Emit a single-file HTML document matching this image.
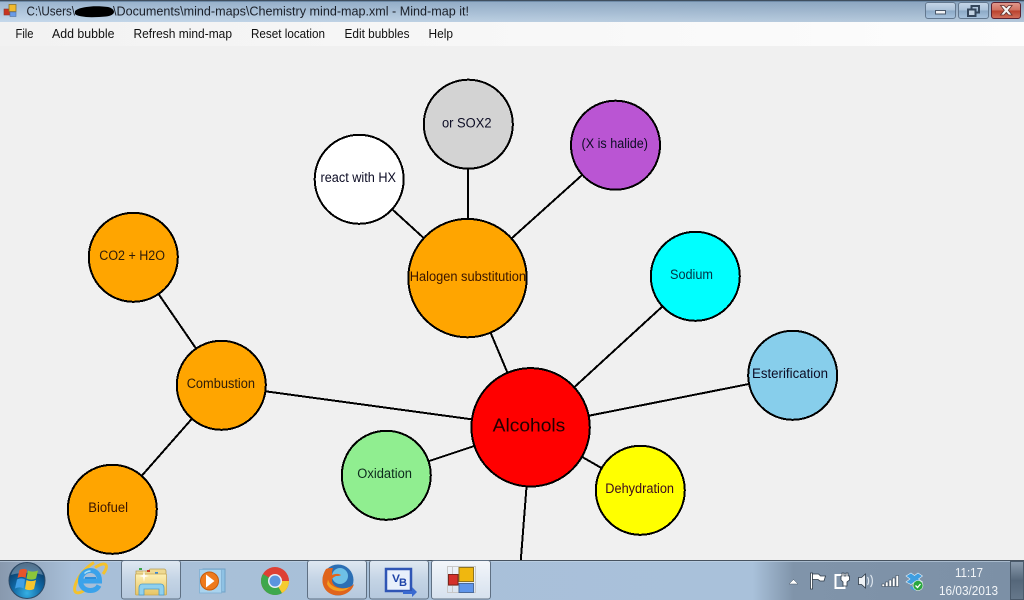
<!DOCTYPE html>
<html><head><meta charset="utf-8"><style>
html,body{margin:0;padding:0;background:#f0f0f0;overflow:hidden}
svg{display:block;font-family:"Liberation Sans",sans-serif}
</style></head><body>
<svg width="1024" height="600" viewBox="0 0 1024 600" xmlns="http://www.w3.org/2000/svg">
<defs>
<linearGradient id="tb" x1="0" y1="0" x2="0" y2="1"><stop offset="0" stop-color="#8fabc8"/><stop offset="1" stop-color="#c0d5e9"/></linearGradient>
<linearGradient id="tbh" x1="0" y1="0" x2="1" y2="0"><stop offset="0" stop-color="#fff" stop-opacity=".08"/><stop offset="1" stop-color="#000" stop-opacity=".06"/></linearGradient>
<linearGradient id="menu" x1="0" y1="0" x2="1" y2="0"><stop offset="0" stop-color="#f2f2f2"/><stop offset="1" stop-color="#fdfdfd"/></linearGradient>
<linearGradient id="task" x1="0" y1="0" x2="1" y2="0"><stop offset="0" stop-color="#8899ae"/><stop offset=".07" stop-color="#a8bfd8"/><stop offset=".735" stop-color="#a9c1da"/><stop offset=".775" stop-color="#8094aa"/><stop offset="1" stop-color="#7c90a6"/></linearGradient>
<linearGradient id="btn" x1="0" y1="0" x2="0" y2="1"><stop offset="0" stop-color="#dfe8f2"/><stop offset=".5" stop-color="#c4d4e5"/><stop offset="1" stop-color="#b5c8dd"/></linearGradient>
<linearGradient id="btna" x1="0" y1="0" x2="0" y2="1"><stop offset="0" stop-color="#f3f6fa"/><stop offset="1" stop-color="#d6e1ee"/></linearGradient>
<linearGradient id="cb" x1="0" y1="0" x2="0" y2="1"><stop offset="0" stop-color="#c5d6e8"/><stop offset=".5" stop-color="#a9c0d8"/><stop offset=".51" stop-color="#8ca9c6"/><stop offset="1" stop-color="#a9c4de"/></linearGradient>
<linearGradient id="close" x1="0" y1="0" x2="0" y2="1"><stop offset="0" stop-color="#e19a8e"/><stop offset=".5" stop-color="#cf6f5e"/><stop offset=".51" stop-color="#b9402c"/><stop offset="1" stop-color="#d2705c"/></linearGradient>
<radialGradient id="orb" cx=".5" cy=".85" r=".85"><stop offset="0" stop-color="#35b0e4"/><stop offset=".5" stop-color="#0e639f"/><stop offset="1" stop-color="#0a2f52"/></radialGradient>
<linearGradient id="fold" x1="0" y1="0" x2="0" y2="1"><stop offset="0" stop-color="#fdf0b4"/><stop offset="1" stop-color="#e6c464"/></linearGradient>
<linearGradient id="sd" x1="0" y1="0" x2="0" y2="1"><stop offset="0" stop-color="#8b9cae"/><stop offset=".5" stop-color="#55677a"/><stop offset="1" stop-color="#66788b"/></linearGradient>
</defs>

<!-- canvas -->
<rect width="1024" height="600" fill="#f0f0f0"/>

<!-- title bar -->
<rect x="0" y="0" width="1024" height="22" fill="url(#tb)"/>
<rect x="0" y="0" width="1024" height="22" fill="url(#tbh)"/>
<rect x="0" y="0" width="1024" height="1" fill="#3f4e5e"/>
<rect x="0" y="1" width="1024" height="1" fill="#6f8ba8"/>
<!-- app icon small -->
<rect x="4" y="9" width="6" height="6" fill="#c8331f" stroke="#8a3a2c" stroke-width=".6"/>
<rect x="9" y="4.500" width="7" height="7" fill="#f0b92c" stroke="#8e7428" stroke-width=".8"/>
<rect x="10" y="12" width="6" height="4.500" fill="#6a9be8" stroke="#53709c" stroke-width=".6"/>
<g font-size="13" fill="#1a1f28">
<text x="26.500" y="15.500" textLength="48.500" lengthAdjust="spacingAndGlyphs">C:\Users\</text>
<text x="113" y="15.500" textLength="356" lengthAdjust="spacingAndGlyphs">\Documents\mind-maps\Chemistry mind-map.xml - Mind-map it!</text>
</g>
<path d="M75 11c3-3 10-4 16-4.500 5-.5 13 0 17 .5 4 1 6 3 6 5 0 2-3 4-8 4.500-6 .5-14 1-20 .5-4-.5-11-1.500-11-3.500 0-1 0-2 0-2.500z" fill="#000"/>
<!-- window buttons -->
<rect x="925.500" y="2.500" width="30" height="16" rx="2.500" fill="url(#cb)" stroke="#63788f"/>
<rect x="958.500" y="2.500" width="30" height="16" rx="2.500" fill="url(#cb)" stroke="#63788f"/>
<rect x="991.500" y="2.500" width="29" height="16" rx="2.500" fill="url(#close)" stroke="#5d2130"/>
<rect x="935.500" y="10.500" width="10" height="3.500" fill="#f0f2f5" stroke="#4a586a"/>
<rect x="971.500" y="6" width="7.500" height="6.500" fill="none" stroke="#34465b" stroke-width="2"/>
<rect x="968" y="9.500" width="7.500" height="6.500" fill="#c2d2e2" stroke="#34465b" stroke-width="2"/>
<path d="M1000.500 5.500h3.500l2.300 2.300 2.300-2.300h3.500l-3.800 4.700 3.800 4.800h-3.500l-2.300-2.500-2.300 2.500h-3.500l3.800-4.800z" fill="#f4f4f4" stroke="#63302c" stroke-width=".8"/>

<!-- menu -->
<rect x="0" y="22" width="1024" height="24" fill="url(#menu)"/>
<g font-size="12.500" fill="#101010">
<text x="15.500" y="38" textLength="18" lengthAdjust="spacingAndGlyphs">File</text>
<text x="52" y="38" textLength="62.500" lengthAdjust="spacingAndGlyphs">Add bubble</text>
<text x="133.500" y="38" textLength="98.500" lengthAdjust="spacingAndGlyphs">Refresh mind-map</text>
<text x="251" y="38" textLength="74" lengthAdjust="spacingAndGlyphs">Reset location</text>
<text x="344.500" y="38" textLength="65" lengthAdjust="spacingAndGlyphs">Edit bubbles</text>
<text x="428.500" y="38" textLength="24.500" lengthAdjust="spacingAndGlyphs">Help</text>
</g>

<!-- links -->
<g stroke="#000" stroke-width="2" fill="none" shape-rendering="crispEdges">
<path d="M530.500 427.300L467.500 278"/>
<path d="M530.500 427.300L695.300 276.300"/>
<path d="M530.500 427.300L792.700 375.300"/>
<path d="M530.500 427.300L640.300 490.300"/>
<path d="M530.500 427.300L386.300 475.300"/>
<path d="M530.500 427.300L221.300 385.300"/>
<path d="M526.500 487L520.800 560"/>
<path d="M467.500 278L359 179"/>
<path d="M468 278V124"/>
<path d="M467.500 278L615.500 145"/>
<path d="M221.300 385.300L133.300 257.300"/>
<path d="M221.300 385.300L112.300 509.300"/>
</g>

<!-- bubbles -->
<g stroke="#000" stroke-width="2" shape-rendering="crispEdges">
<circle cx="530.600" cy="427.300" r="59.200" fill="#ff0000"/>
<circle cx="467.500" cy="278.100" r="59.200" fill="#ffa500"/>
<circle cx="468.300" cy="124.200" r="44.500" fill="#d3d3d3"/>
<circle cx="615.500" cy="145.200" r="44.500" fill="#ba55d3"/>
<circle cx="359.200" cy="179.300" r="44.500" fill="#ffffff"/>
<circle cx="695.300" cy="276.300" r="44.500" fill="#00ffff"/>
<circle cx="792.700" cy="375.300" r="44.500" fill="#87ceeb"/>
<circle cx="640.300" cy="490.300" r="44.500" fill="#ffff00"/>
<circle cx="386.300" cy="475.300" r="44.500" fill="#90ee90"/>
<circle cx="221.300" cy="385.300" r="44.500" fill="#ffa500"/>
<circle cx="133.300" cy="257.300" r="44.500" fill="#ffa500"/>
<circle cx="112.300" cy="509.300" r="44.500" fill="#ffa500"/>
</g>
<g font-size="13.500" fill="#0c0c24">
<text x="492.700" y="431.700" font-size="18.500" textLength="72.600" lengthAdjust="spacingAndGlyphs" fill="#220000">Alcohols</text>
<text x="409.700" y="281" textLength="116.300" lengthAdjust="spacingAndGlyphs" fill="#3a1500">Halogen substitution</text>
<text x="442" y="127.300" textLength="49.500" lengthAdjust="spacingAndGlyphs">or SOX2</text>
<text x="581.500" y="148" textLength="66.500" lengthAdjust="spacingAndGlyphs">(X is halide)</text>
<text x="320.500" y="182" textLength="75.500" lengthAdjust="spacingAndGlyphs">react with HX</text>
<text x="670" y="279" textLength="43" lengthAdjust="spacingAndGlyphs" fill="#003344">Sodium</text>
<text x="752" y="378" textLength="76" lengthAdjust="spacingAndGlyphs">Esterification</text>
<text x="605.300" y="493" textLength="68.700" lengthAdjust="spacingAndGlyphs" fill="#3a0a20">Dehydration</text>
<text x="357.300" y="478" textLength="54.700" lengthAdjust="spacingAndGlyphs" fill="#0c2a1c">Oxidation</text>
<text x="186.700" y="388" textLength="68.300" lengthAdjust="spacingAndGlyphs" fill="#2e1c08">Combustion</text>
<text x="99.300" y="260" textLength="65.700" lengthAdjust="spacingAndGlyphs" fill="#2e1c08">CO2 + H2O</text>
<text x="88.300" y="512" textLength="39.700" lengthAdjust="spacingAndGlyphs" fill="#3a1500">Biofuel</text>
</g>

<!-- taskbar -->
<rect x="0" y="560" width="1024" height="40" fill="url(#task)"/>
<rect x="0" y="560" width="1024" height="1" fill="#46525f"/>
<rect x="0" y="561" width="1024" height="1" fill="#c4d5e6" opacity=".6"/>

<!-- buttons -->
<rect x="121.500" y="560.500" width="59" height="38.500" rx="2.500" fill="url(#btn)" stroke="#5f7083"/>
<rect x="307.500" y="560.500" width="59" height="38.500" rx="2.500" fill="url(#btn)" stroke="#5f7083"/>
<rect x="369.500" y="560.500" width="59" height="38.500" rx="2.500" fill="url(#btn)" stroke="#5f7083"/>
<rect x="431.500" y="560.500" width="59" height="38.500" rx="2.500" fill="url(#btna)" stroke="#5f7083"/>

<!-- start orb -->
<circle cx="27" cy="580.500" r="18" fill="url(#orb)" stroke="#2e4a66"/>
<path d="M11 575c3-9 10-12 16-12s13 3 16 12c-9-3-23-3-32 0z" fill="#fff" opacity=".3"/>
<path d="M19.500 570c3-1.500 5.500-1.500 7.500 0l-1.500 8c-2.500-1.500-5-1.500-8 0z" fill="#e8552a"/>
<path d="M28 570.500c3 1.500 6 1.500 10 0l-2 8c-3 1.500-6 1.500-9.500 0z" fill="#8cc63a"/>
<path d="M17 579.500c3-1.500 5.500-1.500 8 0l-1.500 9c-2.500-1.500-5-1.500-8.500 0z" fill="#3f9fe6"/>
<path d="M26.500 580c3 1.500 6 1.500 9.500 0l-2 9c-3 1.500-6 1.500-9 0z" fill="#f7c52e"/>

<!-- IE -->
<g fill="none">
<path d="M95 567.500c4-2.500 8.500-4.500 10.500-3 2.500 2-.5 7-2.500 9.500M84 590.500c-4 2.500-7 3-8.500 1.500-2.500-2.500.5-10.500 4.500-16.500 4-5.500 9-10 14-13" stroke="#f4c22c" stroke-width="3"/>
<path d="M81.500 581H99.500C99.500 574 95.500 570.500 90.500 570.500C85 570.500 80.500 575 80.500 581C80.500 587 85 590.500 90.500 590.500C94.500 590.500 97.500 588.500 99 585.500" stroke="#3aa2ea" stroke-width="5"/>
<path d="M85 578h11" stroke="#2c8fdc" stroke-width="2"/>
<path d="M84.500 573.500c1.500-1.500 3.500-2.500 6-2.500" stroke="#a6e0f8" stroke-width="1.500"/>
</g>

<!-- explorer -->
<path d="M136 571h12l2-2h14c1 0 2 1 2 2v4h-30z" fill="#eed991" stroke="#b9a15a" stroke-width=".8"/>
<rect x="139" y="568" width="3" height="2" fill="#3aa64a"/><rect x="147" y="570" width="3" height="2" fill="#c8402a"/><rect x="155" y="572" width="3" height="2" fill="#3a8ad8"/>
<rect x="135.500" y="574" width="31" height="21" rx="1" fill="url(#fold)" stroke="#c6a654" stroke-width=".8"/>
<path d="M139 595v-7c0-2 1-4 3-4h19c2 0 3 2 3 4v7h-5v-6h-15v6z" fill="#8fd0ee" stroke="#4f9bc9" stroke-width=".8"/>
<path d="M144 570l1 5 4 1-4 1-1 5-1-5-4-1 4-1z" fill="#fff" opacity=".9"/>

<!-- WMP -->
<rect x="203" y="569" width="22" height="23" fill="#8fc2e4" stroke="#6fa3c8"/>
<rect x="199.500" y="569.500" width="22" height="23.500" fill="#a9d3ee" stroke="#7fb0d2" stroke-width=".8"/>
<circle cx="209.500" cy="581" r="9" fill="#ee7a1c" stroke="#c75c0c"/>
<path d="M206 574.500l8.500 6.500-8.500 6.500z" fill="#fff"/>

<!-- chrome -->
<circle cx="275" cy="581" r="14" fill="#dd4034"/>
<path d="M275 581l-12.100 7a14 14 0 0 1 0-14z" fill="#3da84c"/>
<path d="M262.900 588l12.100-7 7 12.100a14 14 0 0 1-19.100-5.100z" fill="#3da84c"/>
<path d="M275 581h14a14 14 0 0 1-7 12.100z" fill="#f5cc30"/>
<circle cx="275" cy="581" r="7" fill="#e9eef5"/>
<circle cx="275" cy="581" r="5.500" fill="#5b94dd"/>

<!-- firefox -->
<circle cx="338" cy="580" r="15.500" fill="#2c6fb4"/>
<circle cx="340" cy="576" r="8" fill="#6ec0e6"/>
<path d="M326 569c-4 6-5 14-1 20 4 6 13 8 20 5 5-2 8-6 9-10-3 3-8 5-13 4-6-1-9-4-9-8 0-2 2-3 4-4 2 0 4 0 5-1-3-2-7-1-9 0 0-3 0-5 1-7-2 0-5 0-7 1z" fill="#e0641c"/>
<path d="M327 584c2 5 9 8 15 7 3-.5 6-2 8-4-5 2-10 2-14 .5-4-1.500-7-4-8-8z" fill="#f5a623" opacity=".9"/>

<!-- VB -->
<rect x="386" y="569" width="25" height="22" fill="#e8f0fb" stroke="#2f55b5" stroke-width="2.500"/>
<path d="M403 591h9v-4l5 5-5 5v-3h-9z" fill="#3a6ad0"/>
<text x="392" y="582" font-size="11" font-weight="bold" fill="#1f44a8" textLength="8" lengthAdjust="spacingAndGlyphs">V</text>
<text x="399" y="586" font-size="11" font-weight="bold" fill="#1f44a8" textLength="8" lengthAdjust="spacingAndGlyphs">B</text>

<!-- app -->
<g fill="none" stroke="#c8c8c8" stroke-width="1">
<rect x="447.500" y="566.500" width="28" height="26"/><path d="M447.500 574.500h10M452.500 566.500v26M447.500 585.500h10"/>
</g>
<rect x="448.500" y="574.500" width="9.500" height="10.500" fill="#d4302a" stroke="#7a231c"/>
<rect x="459" y="567.500" width="14.500" height="14" fill="#f0b70f" stroke="#8f7420"/>
<rect x="459" y="583.500" width="14.500" height="9" fill="#5f95ea" stroke="#4a6a9c"/>

<!-- tray -->
<path d="M789 584l4.500-4.500 4.500 4.500z" fill="#fff" stroke="#4d5b6a" stroke-width=".5"/>
<g stroke="#2f3b48" stroke-width=".8">
<path d="M810.500 573h2v16h-2z" fill="#fff"/>
<path d="M812.500 574h6l2 2h5l-1.500 5h-4l-2-1.500h-5.500z" fill="#fff"/>
<path d="M835.500 575h9v13h-9z" fill="none" stroke="#fff" stroke-width="2"/>
<path d="M842 573h2v3h2v-3h2v3h1.500v4l-2.500 2v4h-4v-4l-2-2v-4h1z" fill="#fff"/>
<path d="M858.500 577.500h3l4-3.500v14l-4-3.500h-3z" fill="#eef2f6"/>
<g fill="#fff" stroke-width=".5"><rect x="882" y="584" width="2.500" height="2.500"/><rect x="885.500" y="582" width="2.500" height="4.500"/><rect x="889" y="580" width="2.500" height="6.500"/><rect x="892.500" y="578" width="2.500" height="8.500"/><rect x="896" y="575.500" width="2.500" height="11"/></g>
</g>
<path d="M867.500 577c1.500 2 1.500 6 0 8M870.500 575c2.500 3 2.500 9 0 12" stroke="#dde5ed" fill="none" stroke-width="1.200"/>
<path d="M906 576l5-3 3.500 2.500 3.500-2.500 4.500 3-4 3 4 3-4.500 2.500-3.500-2.500-3.500 2.500-5-2.500 4-3z" fill="#3f9ee0" stroke="#e8f2fa" stroke-width=".6"/>
<path d="M910.500 586l4 2 4-2v2.500l-4 2-4-2z" fill="#3f9ee0"/>
<circle cx="918" cy="585.500" r="5" fill="#2aa640" stroke="#e8f3e8" stroke-width=".6"/>
<path d="M915.500 585.500l2 2 3-3.500" stroke="#fff" fill="none" stroke-width="1.300"/>
<g fill="#f2f5f8" font-size="12.500">
<text x="955" y="577" textLength="28" lengthAdjust="spacingAndGlyphs">11:17</text>
<text x="939" y="595" textLength="59" lengthAdjust="spacingAndGlyphs">16/03/2013</text>
</g>
<rect x="1010.500" y="561.500" width="13" height="38" fill="url(#sd)" stroke="#4a5a6b"/>
</svg>
</body></html>
